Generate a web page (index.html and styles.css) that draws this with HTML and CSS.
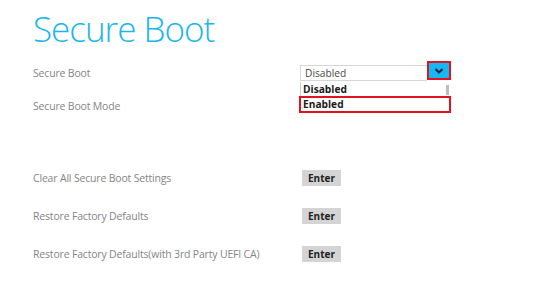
FILE: index.html
```html
<!DOCTYPE html>
<html>
<head>
<meta charset="utf-8">
<link rel="stylesheet" href="styles.css">
</head>
<body>
<div class="page">
  <h1 class="title">Secure Boot</h1>
  <div class="row row-first">
    <div class="label">Secure Boot</div>
    <div class="control">
      <div class="select">
        <span class="select-value">Disabled</span>
        <span class="select-btn">
          <svg width="10" height="6" viewBox="0 0 10 6"><polyline points="1.5,1 5,4.5 8.5,1" fill="none" stroke="#0d2340" stroke-width="2"/></svg>
        </span>
      </div>
      <div class="dropdown">
        <div class="opt">Disabled</div>
        <div class="opt opt-sel">Enabled</div>
        <div class="scroll"></div>
      </div>
    </div>
  </div>
  <div class="row row-mode">
    <div class="label">Secure Boot Mode</div>
  </div>
  <div class="row row-action row-gap">
    <div class="label">Clear All Secure Boot Settings</div>
    <div class="control"><span class="btn">Enter</span></div>
  </div>
  <div class="row row-action">
    <div class="label">Restore Factory Defaults</div>
    <div class="control"><span class="btn">Enter</span></div>
  </div>
  <div class="row row-action">
    <div class="label">Restore Factory Defaults(with 3rd Party UEFI CA)</div>
    <div class="control"><span class="btn">Enter</span></div>
  </div>
</div>
</body>
</html>
```
FILE: styles.css
```css
html, body {
  margin: 0;
  padding: 0;
  background: #ffffff;
}
body {
  font-family: "Open Sans", "Noto Sans", sans-serif;
  width: 550px;
  height: 296px;
  overflow: hidden;
}
.page {
  padding-left: 33px;
  padding-top: 7px;
}
.title {
  margin: 0;
  font-weight: 300;
  font-size: 35px;
  line-height: 44px;
  color: #1ab6ee;
  letter-spacing: -1px;
}
.row {
  display: grid;
  grid-template-columns: 267px 1fr;
  align-items: center;
  height: 16px;
}
.row-first {
  margin-top: 14px;
}
.row-mode {
  margin-top: 17px;
}
.row-gap {
  margin-top: 56px;
}
.row-action + .row-action {
  margin-top: 22px;
}
.label {
  font-size: 10.5px;
  letter-spacing: -0.18px;
  color: #858585;
  white-space: nowrap;
}
.control {
  position: relative;
  height: 16px;
  display: flex;
  align-items: center;
}
.select {
  display: flex;
  width: 151px;
  height: 16px;
}
.select-value {
  flex: 1;
  border: 1px solid #d6d6d6;
  border-right: none;
  font-size: 10.2px;
  line-height: 14px;
  color: #4a4a4a;
  padding-left: 4px;
}
.select-btn {
  width: 20px;
  height: 15px;
  margin-top: -4px;
  background: #14b8f2;
  border: 2px solid #e0141e;
  display: flex;
  align-items: center;
  justify-content: center;
}
.dropdown {
  position: absolute;
  left: 0;
  top: 17px;
  width: 149px;
  background: #fff;
  border-left: 1px solid #cfcfcf;
  box-sizing: border-box;
}
.opt {
  font-size: 10.2px;
  font-weight: 700;
  color: #1a1a1a;
  height: 14px;
  line-height: 14px;
  padding-left: 2px;
}
.opt-sel {
  border: 2px solid #e0141e;
  height: 13px;
  line-height: 13px;
  margin-left: -2px;
  margin-right: -2px;
  padding-left: 2px;
  margin-top: 0;
}
.scroll {
  position: absolute;
  right: 0;
  top: 3px;
  width: 3px;
  height: 10px;
  background: #bdbdbd;
}
.btn {
  margin-left: 2px;
  display: block;
  width: 39px;
  height: 16px;
  line-height: 16px;
  text-align: center;
  background: #d4d4d4;
  font-size: 10px;
  font-weight: 700;
  color: #222;
}
```
